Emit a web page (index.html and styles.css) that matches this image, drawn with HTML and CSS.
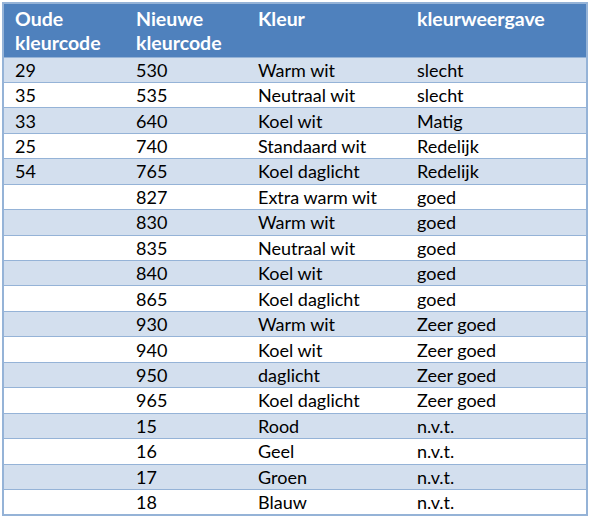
FILE: index.html
```html
<!DOCTYPE html>
<html lang="nl">
<head>
<meta charset="utf-8">
<link rel="stylesheet" href="styles.css">
</head>
<body>
<table class="codes">
  <thead>
    <tr><th>Oude<br>kleurcode</th><th>Nieuwe<br>kleurcode</th><th>Kleur</th><th>kleurweergave</th></tr>
  </thead>
  <tbody>
    <tr><td>29</td><td>530</td><td>Warm wit</td><td>slecht</td></tr>
    <tr><td>35</td><td>535</td><td>Neutraal wit</td><td>slecht</td></tr>
    <tr><td>33</td><td>640</td><td>Koel wit</td><td>Matig</td></tr>
    <tr><td>25</td><td>740</td><td>Standaard wit</td><td>Redelijk</td></tr>
    <tr><td>54</td><td>765</td><td>Koel daglicht</td><td>Redelijk</td></tr>
    <tr><td></td><td>827</td><td>Extra warm wit</td><td>goed</td></tr>
    <tr><td></td><td>830</td><td>Warm wit</td><td>goed</td></tr>
    <tr><td></td><td>835</td><td>Neutraal wit</td><td>goed</td></tr>
    <tr><td></td><td>840</td><td>Koel wit</td><td>goed</td></tr>
    <tr><td></td><td>865</td><td>Koel daglicht</td><td>goed</td></tr>
    <tr><td></td><td>930</td><td>Warm wit</td><td>Zeer goed</td></tr>
    <tr><td></td><td>940</td><td>Koel wit</td><td>Zeer goed</td></tr>
    <tr><td></td><td>950</td><td>daglicht</td><td>Zeer goed</td></tr>
    <tr><td></td><td>965</td><td>Koel daglicht</td><td>Zeer goed</td></tr>
    <tr><td></td><td>15</td><td>Rood</td><td>n.v.t.</td></tr>
    <tr><td></td><td>16</td><td>Geel</td><td>n.v.t.</td></tr>
    <tr><td></td><td>17</td><td>Groen</td><td>n.v.t.</td></tr>
    <tr><td></td><td>18</td><td>Blauw</td><td>n.v.t.</td></tr>
  </tbody>
</table>
</body>
</html>
```
FILE: styles.css
```css
html, body {
  margin: 0;
  padding: 0;
  background: #ffffff;
}
body {
  padding: 2px 0 0 2px;
}
.codes {
  border-collapse: collapse;
  width: 586px;
  table-layout: fixed;
  font-family: Lato, "Open Sans", sans-serif;
  font-size: 18px;
  color: #000000;
  border: 2px solid #95b3d7;
}
.codes th {
  background: #4f81bd;
  color: #ffffff;
  font-weight: bold;
  font-size: 19.5px;
  text-align: left;
  vertical-align: top;
  padding: 3px 0 0 11px;
  height: 54px;
  line-height: 24px;
  box-sizing: border-box;
}
.codes th:nth-child(1), .codes td:nth-child(1) { width: 122px; }
.codes th:nth-child(2), .codes td:nth-child(2) { width: 122px; }
.codes th:nth-child(3), .codes td:nth-child(3) { width: 159px; }
.codes td {
  padding: 0 0 0 11px;
  height: 24.45px;
  line-height: 22px;
  border-top: 1px solid #95b3d7;
  vertical-align: middle;
  white-space: nowrap;
}
.codes tbody tr:nth-child(odd) td {
  background: #d3dfee;
}
```
